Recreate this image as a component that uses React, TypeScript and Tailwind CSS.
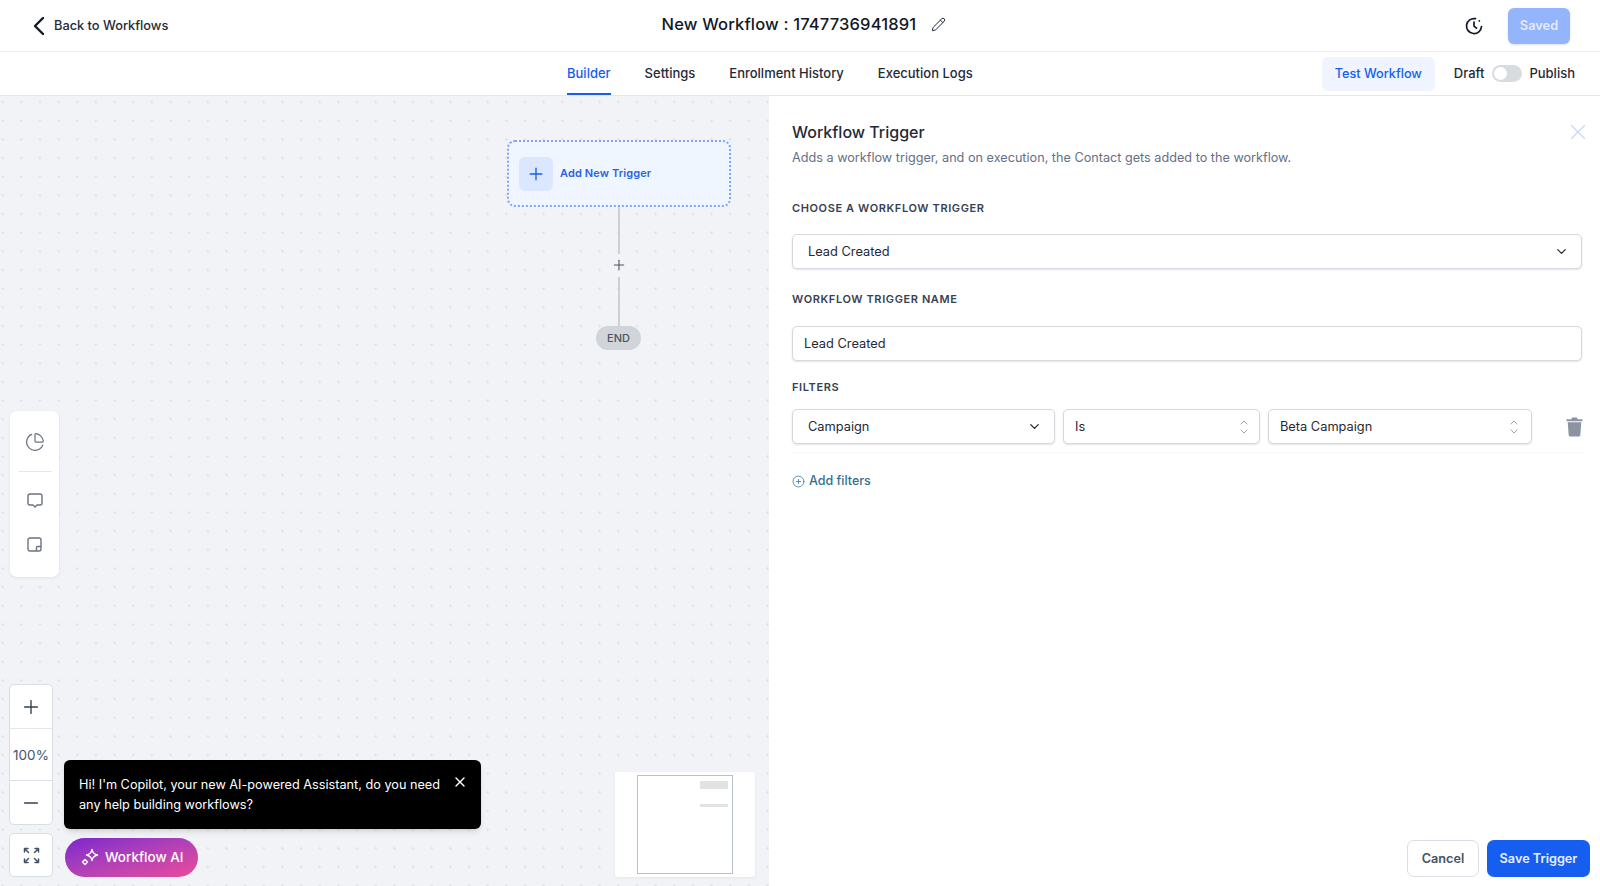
import { ChartPie, ChevronDown, ChevronLeft, CirclePlus, Minus, Pencil, Plus, X } from 'lucide-react';

const tabs = ['Builder', 'Settings', 'Enrollment History', 'Execution Logs'];

const fieldClass =
  'flex h-[35px] items-center rounded-[5px] border border-[#d5d8df] bg-white shadow-[0_1px_2px_rgba(16,24,40,0.12)] text-[12.8px] text-[#1f2937]';

const labelClass = 'text-[11px] font-semibold tracking-[0.055em] text-[#374151]';

const UpDown = () => (
  <svg width="10" height="16" viewBox="0 0 10 16" fill="none" stroke="#9ca3af" strokeWidth="1" strokeLinecap="round" strokeLinejoin="round">
    <path d="M2 5l3-3 3 3" />
    <path d="M2 11l3 3 3-3" />
  </svg>
);

const HistoryIcon = () => (
  <svg width="18" height="18" viewBox="0 0 18 18" fill="none" stroke="#111827" strokeWidth="1.7" strokeLinecap="round" strokeLinejoin="round">
    <path d="M10.500 1.700A7.500 7.500 0 1 0 16.500 9.500" />
    <path d="M9 5v4.200l2.500 2" />
    <path d="M14.200 3.800l.2.200" />
  </svg>
);

const TrashIcon = () => (
  <svg width="17" height="20" viewBox="0 0 17 20" fill="#8d93a0">
    <path d="M6 0.500h5l.6 1.700H16.500v2H0.500v-2h4.900z" />
    <path d="M1.700 5.200h13.600l-1 13a1.500 1.500 0 0 1-1.500 1.300H4.200a1.500 1.500 0 0 1-1.500-1.300z" />
  </svg>
);

const ChatIcon = () => (
  <svg width="18" height="18" viewBox="0 0 18 18" fill="none" stroke="#6b7280" strokeWidth="1.4" strokeLinejoin="round">
    <path d="M4 2h10a2 2 0 0 1 2 2v7a2 2 0 0 1-2 2h-3l-2 2-2-2H4a2 2 0 0 1-2-2V4a2 2 0 0 1 2-2z" />
  </svg>
);

const NoteIcon = () => (
  <svg width="15" height="15" viewBox="0 0 15 15" fill="none" stroke="#6b7280" strokeWidth="1.4" strokeLinejoin="round">
    <rect x="1" y="1" width="13" height="13" rx="2" />
    <path d="M14 9.500h-3.500a1 1 0 0 0-1 1V14" />
  </svg>
);

const FitIcon = () => (
  <svg width="17" height="17" viewBox="0 0 17 17" fill="none" stroke="#475467" strokeWidth="1.5" strokeLinecap="round" strokeLinejoin="round">
    <path d="M1.500 5V1.500H5M1.500 1.500l4 4" />
    <path d="M15.500 5V1.500H12M15.500 1.500l-4 4" />
    <path d="M1.500 12v3.500H5M1.500 15.500l4-4" />
    <path d="M15.500 12v3.500H12M15.500 15.500l-4-4" />
  </svg>
);

const SparkIcon = () => (
  <svg width="19" height="19" viewBox="0 0 19 19" fill="none" stroke="#fff" strokeWidth="1.5" strokeLinejoin="round">
    <path d="M12 1.500c.5 3.200 2 4.700 5.500 5.500-3.500.8-5 2.300-5.500 5.500-.5-3.200-2-4.700-5.500-5.500 3.500-.8 5-2.300 5.500-5.500z" />
    <path d="M5 11.500l2.500 2.500L5 16.500 2.500 14z" />
  </svg>
);

export default function App() {
  return (
    <div className="flex h-[886px] w-[1600px] flex-col overflow-hidden bg-white font-['Inter',sans-serif]">
      {/* top bar */}
      <header className="grid h-[52px] shrink-0 grid-cols-3 items-center border-b border-[#eceef1] pr-[30px] pl-[30px]">
        <div className="flex items-center text-[12.8px] font-medium text-[#1f2937]">
          <ChevronLeft className="-my-2 -mr-[1px] -ml-[7px] h-[32px] w-[32px] text-[#111827]" strokeWidth={1.8} />
          <span>Back to Workflows</span>
        </div>
        <div className="-mt-[2px] flex items-center justify-center gap-[15px] pl-[8px]">
          <span className="text-[16.5px] font-medium tracking-[0.01em] whitespace-nowrap text-[#111827]">New Workflow : 1747736941891</span>
          <Pencil className="h-[15px] w-[15px] text-[#1f2937]" strokeWidth={1.6} />
        </div>
        <div className="flex items-center justify-end gap-[25px]">
          <HistoryIcon />
          <button className="h-[36px] w-[62px] rounded-[6px] bg-[#94b4fb] text-[12.8px] font-semibold text-[#e3ebfe] shadow-sm">Saved</button>
        </div>
      </header>

      {/* tabs */}
      <div className="flex h-[44px] shrink-0 items-center border-b border-[#e5e7eb] pr-[25px] pl-[567px]">
        <nav className="flex h-full gap-[34px]">
          {tabs.map((tab, i) => (
            <div
              key={tab}
              className={`flex items-center border-b-2 pt-[2px] text-[13px] font-medium ${
                i === 0 ? 'border-[#155eef] text-[#155eef]' : 'border-transparent text-[#1f2937]'
              }`}
            >
              {tab}
            </div>
          ))}
        </nav>
        <div className="ml-auto flex items-center text-[13px] font-medium text-[#1f2937]">
          <button className="mr-[19px] h-[34px] w-[113px] rounded-[6px] bg-[#eff4ff] text-[12.7px] font-medium text-[#155eef]">Test Workflow</button>
          <span>Draft</span>
          <div className="mr-[7px] ml-[8px] flex h-[17px] w-[30px] items-center rounded-full bg-[#d8dbe0] p-[2px]">
            <div className="h-[13px] w-[13px] rounded-full bg-white" />
          </div>
          <span>Publish</span>
        </div>
      </div>

      <div className="flex min-h-0 flex-1">
        {/* canvas */}
        <div className="relative w-[769px] shrink-0 bg-[#f1f3f6] bg-[radial-gradient(circle,#dfe3e8_1px,transparent_1.2px)] bg-[length:18.67px_18.67px] bg-[position:-6.7px_-3.3px]">
          <div className="absolute top-[44px] left-[507px] flex h-[67px] w-[224px] items-center gap-[7px] rounded-[8px] border-2 border-dotted border-[#7ea6f8] bg-[#eff6ff] pl-[10px]">
            <div className="flex h-[34px] w-[34px] items-center justify-center rounded-[6px] bg-[#dbe7fe]">
              <Plus className="h-[20px] w-[20px] text-[#155eef]" strokeWidth={1.6} />
            </div>
            <span className="text-[11px] font-semibold tracking-[0.01em] text-[#2a63e8]">Add New Trigger</span>
          </div>
          <div className="absolute top-[111px] left-[618px] h-[47px] w-[1.5px] bg-[#cdd0d5]" />
          <Plus className="absolute top-[161px] left-[611px] h-[16px] w-[16px] text-[#4b5563]" strokeWidth={1.6} />
          <div className="absolute top-[181px] left-[618px] h-[49px] w-[1.5px] bg-[#cdd0d5]" />
          <div className="absolute top-[230px] left-[596px] flex h-[24px] w-[45px] items-center justify-center rounded-full bg-[#d1d4d8] text-[11px] font-medium text-[#4b5563]">
            END
          </div>

          <div className="absolute top-[315px] left-[10px] flex h-[166px] w-[49px] flex-col items-center rounded-[7px] bg-white shadow-[0_1px_3px_rgba(16,24,40,0.08)]">
            <ChartPie className="mt-[21px] h-[20px] w-[20px] text-[#6b7280]" strokeWidth={1.5} />
            <div className="mt-[19px] h-[1px] w-[34px] bg-[#e4e7ec]" />
            <div className="mt-[20px]">
              <ChatIcon />
            </div>
            <div className="mt-[27px]">
              <NoteIcon />
            </div>
          </div>

          <div className="absolute top-[588px] left-[9px] flex h-[141px] w-[44px] flex-col rounded-[5px] border border-[#d9dde5] bg-white text-[#344054]">
            <div className="flex h-[44px] items-center justify-center border-b border-[#e4e7ec]">
              <Plus className="h-[22px] w-[22px]" strokeWidth={1.5} />
            </div>
            <div className="flex h-[52px] items-center justify-center border-b border-[#d9dde5] pt-[1px] text-[13.5px] text-[#475467]">100%</div>
            <div className="flex flex-1 items-center justify-center">
              <Minus className="h-[22px] w-[22px]" strokeWidth={1.5} />
            </div>
          </div>
          <div className="absolute top-[737px] left-[9px] flex h-[44px] w-[44px] items-center justify-center rounded-[5px] border border-[#d9dde5] bg-white">
            <FitIcon />
          </div>

          <div className="absolute top-[664px] left-[64px] flex h-[69px] w-[417px] items-start justify-between rounded-[6px] bg-black py-[15px] pr-[13px] pl-[15px] text-[12.7px] leading-[20px] text-white shadow-md">
            <p className="w-[365px]">Hi! I'm Copilot, your new AI-powered Assistant, do you need any help building workflows?</p>
            <X className="-mt-[1px] h-[16px] w-[16px]" strokeWidth={2} />
          </div>
          <button className="absolute top-[742px] left-[65px] flex h-[39px] w-[133px] items-center gap-[6px] rounded-full bg-gradient-to-br from-[#7e22ce] to-[#ec4899] pl-[15px] text-[13.5px] font-medium text-white">
            <SparkIcon />
            Workflow AI
          </button>

          <div className="absolute top-[676px] left-[615px] h-[105px] w-[140px] rounded-[3px] bg-white shadow-[0_1px_3px_rgba(16,24,40,0.06)]">
            <div className="absolute top-[3px] left-[22px] h-[99px] w-[96px] border-[1.5px] border-[#b9bfcd]" />
            <div className="absolute top-[9px] left-[85px] h-[8px] w-[28px] bg-[#e2e2e2]" />
            <div className="absolute top-[32px] left-[85px] h-[3px] w-[28px] bg-[#e2e2e2]" />
          </div>
        </div>

        {/* trigger panel */}
        <aside className="flex min-w-0 flex-1 flex-col bg-white pt-[24px] pr-[18px] pb-[9px] pl-[23px]">
          <div className="flex items-center justify-between">
            <h2 className="text-[16px] font-medium text-[#1f2937]">Workflow Trigger</h2>
            <X className="-my-1 -mr-[9px] h-[26px] w-[26px] text-[#c7d7fe]" strokeWidth={1.2} />
          </div>
          <p className="mt-[5px] text-[12.66px] text-[#667085]">Adds a workflow trigger, and on execution, the Contact gets added to the workflow.</p>

          <div className={`${labelClass} mt-[32px]`}>CHOOSE A WORKFLOW TRIGGER</div>
          <div className={`${fieldClass} mt-[18px] justify-between pr-[12px] pl-[15px]`}>
            <span>Lead Created</span>
            <ChevronDown className="h-[15px] w-[15px] text-[#1f2937]" strokeWidth={2} />
          </div>

          <div className={`${labelClass} mt-[22px]`}>WORKFLOW TRIGGER NAME</div>
          <div className={`${fieldClass} mt-[18px] px-[11px]`}>Lead Created</div>

          <div className={`${labelClass} mt-[18px]`}>FILTERS</div>
          <div className="mt-[14px] flex items-center pb-[8px] shadow-[0_1px_1px_rgba(16,24,40,0.03)]">
            <div className={`${fieldClass} w-[263px] justify-between pr-[12px] pl-[15px]`}>
              <span>Campaign</span>
              <ChevronDown className="h-[15px] w-[15px] text-[#1f2937]" strokeWidth={2} />
            </div>
            <div className={`${fieldClass} ml-[8px] w-[197px] justify-between pr-[10px] pl-[11px]`}>
              <span>Is</span>
              <UpDown />
            </div>
            <div className={`${fieldClass} ml-[8px] w-[264px] justify-between pr-[12px] pl-[11px]`}>
              <span>Beta Campaign</span>
              <UpDown />
            </div>
            <div className="-mr-[1px] ml-auto">
              <TrashIcon />
            </div>
          </div>

          <div className="mt-[20px] flex items-center gap-[4px] text-[12.5px] font-medium text-[#31708f]">
            <CirclePlus className="h-[13px] w-[13px]" strokeWidth={1.4} />
            Add filters
          </div>

          <div className="-mr-[8px] mt-auto flex justify-end gap-[8px]">
            <button className="h-[37px] w-[72px] rounded-[7px] border border-[#d9dde5] bg-white text-[12.7px] font-semibold text-[#475467]">Cancel</button>
            <button className="h-[37px] w-[103px] rounded-[7px] bg-[#155eef] text-[12.7px] font-semibold text-[#e8effe]">Save Trigger</button>
          </div>
        </aside>
      </div>
    </div>
  );
}
